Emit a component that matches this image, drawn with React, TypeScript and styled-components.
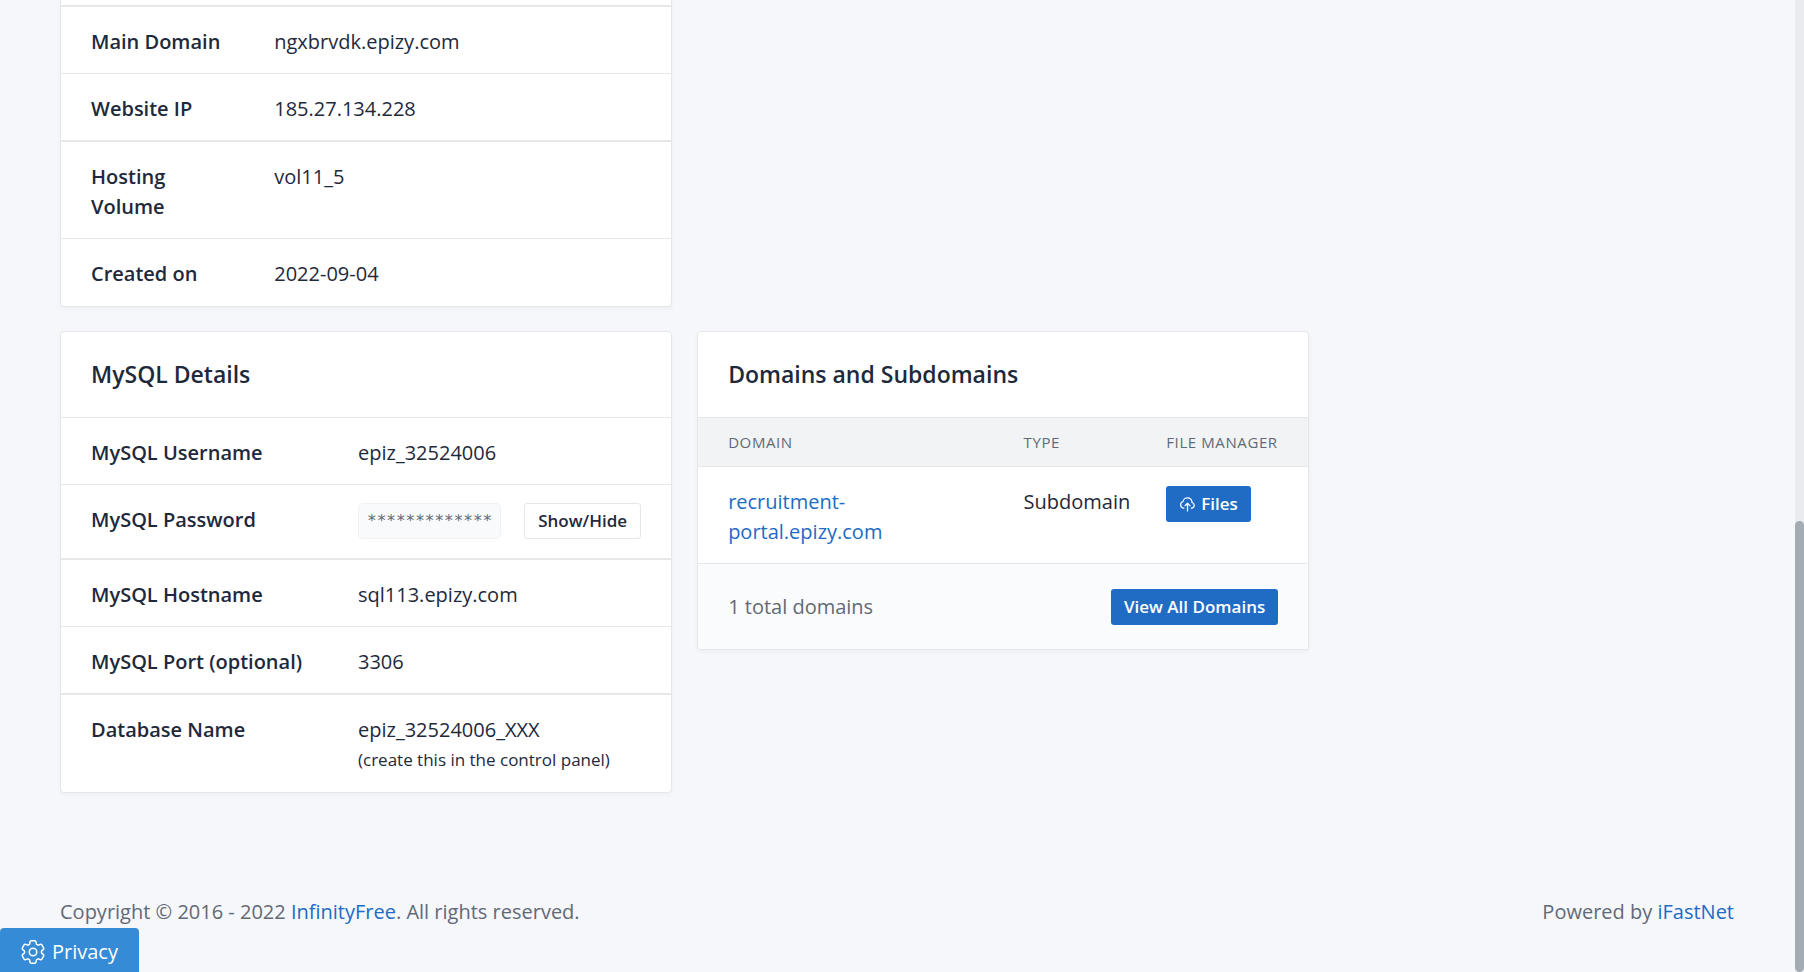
import React from "react";
import styled, { createGlobalStyle, css } from "styled-components";
import { HiOutlineCog6Tooth } from "react-icons/hi2";

const GlobalStyle = createGlobalStyle`
  *, *::before, *::after { box-sizing: border-box; }
  body {
    margin: 0;
    background: #f5f7fb;
    color: #1e293b;
    font: 400 20px/30px "Open Sans", "Noto Sans", sans-serif;
    scrollbar-width: none;
  }
`;

const line = "#e6e7e9";

const Page = styled.div`
  min-height: 100vh;
  padding: 0 70px 0 60px;
`;

const Cards = styled.main`
  display: grid;
  grid-template-columns: repeat(8, minmax(0, 1fr));
  gap: 24px 25px;
  align-items: start;
`;

const Card = styled.section<{ $newRow?: boolean; $continued?: boolean }>`
  grid-column: ${(p) => (p.$newRow ? "1 / span 3" : "span 3")};
  overflow: hidden;
  background: #fff;
  border: 1px solid ${line};
  border-radius: 4px;
  box-shadow: 0 2px 4px rgba(35, 46, 60, 0.04);
  ${(p) =>
    p.$continued &&
    css`
      padding-top: 5px;
      border-top: 0;
      border-radius: 0 0 4px 4px;
    `}
`;

const CardTitle = styled.h3`
  margin: 0;
  padding: 28px 30px;
  font-size: 23px;
  line-height: 29px;
  font-weight: 600;
`;

const DetailTable = styled.table<{ $labelWidth: string }>`
  width: 100%;
  table-layout: fixed;
  border-spacing: 0;

  th {
    width: ${(p) => p.$labelWidth};
    padding: 20px 18px 16px 30px;
    font-weight: 600;
    text-align: left;
  }
  td {
    padding: 20px 30px 16px 18px;
  }
  th, td {
    vertical-align: top;
    border-top: 1px solid ${line};
  }
  tr:last-child > * {
    padding-bottom: 17px;
  }
`;

const Row = styled.tr<{ $thick?: boolean; $control?: boolean }>`
  && > * {
    border-top-width: ${(p) => (p.$thick ? 2 : 1)}px;
  }
  && > td {
    ${(p) => p.$control && "padding-top: 18px;"}
  }
`;

const PasswordLine = styled.div`
  display: flex;
  justify-content: space-between;
  height: 39px;
`;

const Mask = styled.code`
  height: 36px;
  padding: 0 8px;
  background: #f9fafb;
  border: 1px solid #eff1f3;
  border-radius: 5px;
  color: #626976;
  font: 16px/34px "DejaVu Sans Mono", monospace;
`;

const button = css`
  display: inline-flex;
  align-items: center;
  height: 36px;
  border-radius: 3px;
  font-family: inherit;
  font-size: 17px;
  line-height: 24px;
  font-weight: 600;
  white-space: nowrap;
`;

const OutlineButton = styled.button`
  ${button}
  padding: 0 13px;
  background: #fff;
  border: 1px solid ${line};
  color: #1e293b;
`;

const PrimaryLink = styled.a`
  ${button}
  gap: 5px;
  padding: 0 13px;
  background: #206bc4;
  color: #fff;
  text-decoration: none;
`;

const Note = styled.small`
  display: block;
  font-size: 17px;
`;

const DomainTable = styled.table`
  width: 100%;
  border-spacing: 0;

  th {
    padding: 12px 18px;
    background: #f1f3f5;
    border-top: 1px solid ${line};
    color: #626976;
    font-size: 15px;
    line-height: 24px;
    font-weight: 500;
    letter-spacing: 0.04em;
    text-align: left;
    text-transform: uppercase;
    white-space: nowrap;
  }
  td {
    padding: 20px 18px 16px;
    border-top: 1px solid ${line};
    vertical-align: top;
  }
  tr > :first-child { padding-left: 30px; }
  tr > :nth-child(2) { width: 140px; }
  tr > :last-child { width: 160px; padding-right: 30px; }
  td:last-child { padding-top: 19px; }
`;

const CardFooter = styled.div`
  display: flex;
  align-items: center;
  justify-content: space-between;
  padding: 25px 30px 24px;
  background: #fafbfc;
  border-top: 1px solid ${line};
  color: #626976;
`;

const TextLink = styled.a`
  color: #206bc4;
  text-decoration: none;
`;

const Footer = styled.footer`
  display: flex;
  justify-content: space-between;
  padding-top: 104px;
  color: #626976;
`;

const PrivacyButton = styled.button`
  position: fixed;
  left: 0;
  bottom: 0;
  display: flex;
  align-items: center;
  gap: 4px;
  height: 44px;
  padding: 3px 21px 0 18px;
  background: #368bd6;
  border: 0;
  border-radius: 4px 4px 0 0;
  color: #fff;
  font: inherit;
`;

const ScrollTrack = styled.div`
  position: fixed;
  top: 0;
  right: 0;
  bottom: 0;
  width: 9px;
  padding-top: calc(100vh * 521 / 972);
  background: #e9ebef;
`;

const ScrollThumb = styled.div`
  height: 100%;
  background: #a5abb3;
  border-radius: 5px;
`;

const UploadIcon = () => (
  <svg
    width="17"
    height="15"
    viewBox="2 4 21 18"
    fill="none"
    stroke="currentColor"
    strokeWidth="1.5"
    strokeLinecap="round"
    strokeLinejoin="round"
    aria-hidden="true"
  >
    <path d="M8 17.500H7A4.300 4.300 0 0 1 7 9.300A5.500 5 0 0 1 18 10.500A3.600 3.600 0 0 1 18 17.500H17" />
    <path d="M9.500 14.500L12.500 11.500L15.500 14.500M12.500 11.500V21" />
  </svg>
);

type Detail = { label: string; value: React.ReactNode; thick?: boolean; control?: boolean };

const account: Detail[] = [
  { label: "Main Domain", value: "ngxbrvdk.epizy.com", thick: true },
  { label: "Website IP", value: "185.27.134.228" },
  { label: "Hosting Volume", value: "vol11_5", thick: true },
  { label: "Created on", value: "2022-09-04" },
];

const mysql: Detail[] = [
  { label: "MySQL Username", value: "epiz_32524006" },
  {
    label: "MySQL Password",
    value: (
      <PasswordLine>
        <Mask>*************</Mask>
        <OutlineButton type="button">Show/Hide</OutlineButton>
      </PasswordLine>
    ),
    control: true,
  },
  { label: "MySQL Hostname", value: "sql113.epizy.com", thick: true },
  { label: "MySQL Port (optional)", value: "3306" },
  {
    label: "Database Name",
    value: (
      <>
        epiz_32524006_XXX
        <Note>(create this in the control panel)</Note>
      </>
    ),
    thick: true,
  },
];

const Details = ({ rows, labelWidth }: { rows: Detail[]; labelWidth: string }) => (
  <DetailTable $labelWidth={labelWidth}>
    <tbody>
      {rows.map((r) => (
        <Row key={r.label} $thick={r.thick} $control={r.control}>
          <th scope="row">{r.label}</th>
          <td>{r.value}</td>
        </Row>
      ))}
    </tbody>
  </DetailTable>
);

export default function App() {
  return (
    <>
      <GlobalStyle />
      <Page>
        <Cards>
          <Card $newRow $continued>
            <Details rows={account} labelWidth="32%" />
          </Card>
          <Card $newRow>
            <CardTitle>MySQL Details</CardTitle>
            <Details rows={mysql} labelWidth="279px" />
          </Card>
          <Card>
            <CardTitle>Domains and Subdomains</CardTitle>
            <DomainTable>
              <thead>
                <tr>
                  <th scope="col">Domain</th>
                  <th scope="col">Type</th>
                  <th scope="col">File Manager</th>
                </tr>
              </thead>
              <tbody>
                <tr>
                  <td>
                    <TextLink href="#domain">
                      recruitment-
                      <br />
                      portal.epizy.com
                    </TextLink>
                  </td>
                  <td>Subdomain</td>
                  <td>
                    <PrimaryLink href="#files">
                      <UploadIcon />
                      Files
                    </PrimaryLink>
                  </td>
                </tr>
              </tbody>
            </DomainTable>
            <CardFooter>
              <span>1 total domains</span>
              <PrimaryLink href="#domains">View All Domains</PrimaryLink>
            </CardFooter>
          </Card>
        </Cards>
        <Footer>
          <span>
            Copyright © 2016 - 2022 <TextLink href="#home">InfinityFree</TextLink>. All rights reserved.
          </span>
          <span>
            Powered by <TextLink href="#ifastnet">iFastNet</TextLink>
          </span>
        </Footer>
      </Page>
      <PrivacyButton type="button">
        <HiOutlineCog6Tooth size={30} strokeWidth={1.2} aria-hidden="true" />
        Privacy
      </PrivacyButton>
      <ScrollTrack>
        <ScrollThumb />
      </ScrollTrack>
    </>
  );
}
